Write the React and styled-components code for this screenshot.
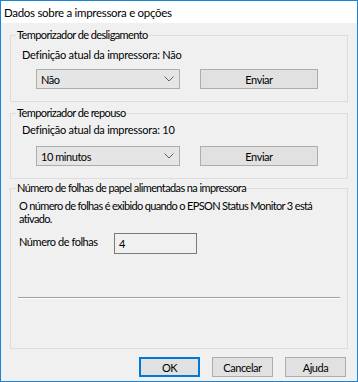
import React from "react";
import styled, { createGlobalStyle } from "styled-components";

const GlobalStyle = createGlobalStyle`
  html, body {
    margin: 0;
    padding: 0;
    background: #f0f0f0;
  }
  body {
    font-family: Lato, "Noto Sans", sans-serif;
    font-size: 11px;
    letter-spacing: -0.45px;
    color: #000;
  }
`;

const Window = styled.div`
  width: 358px;
  height: 382px;
  box-sizing: border-box;
  border: 1px solid #1883d7;
  background: #f0f0f0;
  display: flex;
  flex-direction: column;
`;

const TitleBar = styled.div`
  height: 22px;
  background: #fff;
  display: flex;
  align-items: center;
  padding-left: 3px;
  font-size: 11.5px;
  letter-spacing: -0.3px;
  color: #000;
`;

const Body = styled.div`
  flex: 1;
  display: flex;
  flex-direction: column;
  padding: 4px 9px 0 9px;
`;

const Group = styled.fieldset`
  margin: ${(p) => p.$top || 0}px 0 0 0;
  padding: 0;
  border: 1px solid #dcdcdc;
  min-width: 0;
  flex: ${(p) => (p.$grow ? 1 : "none")};
  display: flex;
  flex-direction: column;
`;

const Legend = styled.legend`
  margin-left: 5px;
  padding: 0 1px;
  line-height: 16px;
  letter-spacing: -0.6px;
`;

const Content = styled.div`
  padding: 0 8px 12px ${(p) => p.$left || 11}px;
  display: flex;
  flex-direction: column;
  flex: 1;
`;

const Info = styled.div`
  margin-top: ${(p) => p.$top}px;
  line-height: 16px;
  letter-spacing: -0.25px;
  white-space: nowrap;
`;

const Row = styled.div`
  margin-top: ${(p) => p.$top}px;
  padding-left: 14px;
  display: flex;
  gap: 20px;
`;

const Select = styled.div`
  width: 144px;
  height: 20px;
  box-sizing: border-box;
  border: 1px solid #acacac;
  background: #e5e5e5;
  display: flex;
  align-items: center;
  justify-content: space-between;
  padding: 0 5px 0 4px;
`;

const Button = styled.div`
  width: ${(p) => p.$w || 61}px;
  height: 20px;
  box-sizing: border-box;
  border: 1px solid ${(p) => (p.$default ? "#0078d7" : "#adadad")};
  box-shadow: ${(p) => (p.$default ? "inset 0 0 0 1px #0078d7" : "none")};
  background: #e1e1e1;
  display: flex;
  align-items: center;
  justify-content: center;
`;

const Paragraph = styled.div`
  margin-top: 3px;
  line-height: 13px;
  letter-spacing: -0.65px;
  white-space: nowrap;
`;

const FieldRow = styled.div`
  margin-top: 8px;
  display: flex;
  align-items: flex-start;
`;

const FieldLabel = styled.div`
  width: 95px;
  flex-shrink: 0;
  white-space: nowrap;
  line-height: 16px;
  padding-top: 1px;
`;

const Field = styled.div`
  width: 83px;
  height: 21px;
  box-sizing: border-box;
  border: 1px solid #7a7a7a;
  display: flex;
  align-items: center;
  padding-left: 4px;
`;

const Separator = styled.div`
  margin: 43px 0 0 -1px;
  width: 322px;
  height: 1px;
  background: #a0a0a0;
  border-bottom: 1px solid #fff;
`;

const Footer = styled.div`
  display: flex;
  justify-content: flex-end;
  gap: 12px;
  padding: 8px 2px 4px 0;
`;

const Chevron = () => (
  <svg width="10" height="6" viewBox="0 0 10 6">
    <polyline points="0.5,0.5 5,5 9.5,0.5" fill="none" stroke="#606060" strokeWidth="1" />
  </svg>
);

const App = () => {
  return (
    <>
      <GlobalStyle />
      <Window>
        <TitleBar>Dados sobre a impressora e opções</TitleBar>
        <Body>
          <Group>
            <Legend>Temporizador de desligamento</Legend>
            <Content>
              <Info $top={4}>Definição atual da impressora: Não</Info>
              <Row $top={6}>
                <Select>
                  <span>Não</span>
                  <Chevron />
                </Select>
                <Button $w={118}>Enviar</Button>
              </Row>
            </Content>
          </Group>
          <Group $top={3}>
            <Legend>Temporizador de repouso</Legend>
            <Content>
              <Info $top={1}>Definição atual da impressora: 10</Info>
              <Row $top={8}>
                <Select>
                  <span>10 minutos</span>
                  <Chevron />
                </Select>
                <Button $w={118}>Enviar</Button>
              </Row>
            </Content>
          </Group>
          <Group $top={1} $grow>
            <Legend>Número de folhas de papel alimentadas na impressora</Legend>
            <Content $left={8}>
              <Paragraph>
                O número de folhas é exibido quando o EPSON Status Monitor 3 está
                <br />
                ativado.
              </Paragraph>
              <FieldRow>
                <FieldLabel>Número de folhas</FieldLabel>
                <Field>4</Field>
              </FieldRow>
              <Separator />
            </Content>
          </Group>
          <Footer>
            <Button $default>OK</Button>
            <Button>Cancelar</Button>
            <Button>Ajuda</Button>
          </Footer>
        </Body>
      </Window>
    </>
  );
};

export default App;
